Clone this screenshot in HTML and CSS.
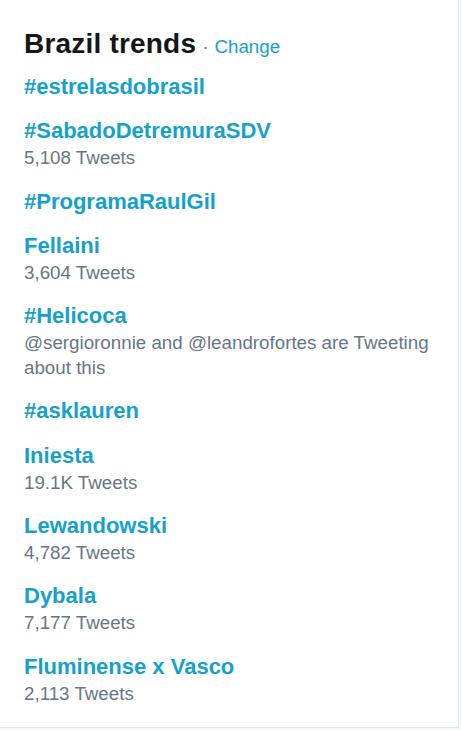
FILE: index.html
```html
<!DOCTYPE html>
<html>
<head>
<meta charset="utf-8">
<link rel="stylesheet" href="styles.css">
</head>
<body>
<div class="card">
  <div class="header">
    <h2 class="title">Brazil trends</h2>
    <span class="dot">·</span>
    <a class="change">Change</a>
  </div>
  <ul class="trends">
    <li class="trend"><a class="name">#estrelasdobrasil</a></li>
    <li class="trend"><a class="name">#SabadoDetremuraSDV</a><div class="meta">5,108 Tweets</div></li>
    <li class="trend"><a class="name">#ProgramaRaulGil</a></li>
    <li class="trend"><a class="name">Fellaini</a><div class="meta">3,604 Tweets</div></li>
    <li class="trend"><a class="name">#Helicoca</a><div class="meta">@sergioronnie and @leandrofortes are Tweeting about this</div></li>
    <li class="trend"><a class="name">#asklauren</a></li>
    <li class="trend"><a class="name">Iniesta</a><div class="meta">19.1K Tweets</div></li>
    <li class="trend"><a class="name">Lewandowski</a><div class="meta">4,782 Tweets</div></li>
    <li class="trend"><a class="name">Dybala</a><div class="meta">7,177 Tweets</div></li>
    <li class="trend"><a class="name">Fluminense x Vasco</a><div class="meta">2,113 Tweets</div></li>
  </ul>
</div>
</body>
</html>
```
FILE: styles.css
```css
html, body {
  margin: 0;
  padding: 0;
  background: #f5f8fa;
  font-family: "Liberation Sans", Arial, sans-serif;
}
.card {
  width: 459px;
  height: 728px;
  box-sizing: border-box;
  background: #ffffff;
  border-right: 1px solid #e1e8ed;
  border-bottom: 1px solid #e1e8ed;
  padding: 28px 20px 0 24px;
}
.header {
  display: flex;
  align-items: baseline;
}
.title {
  margin: 0;
  font-size: 28px;
  line-height: 32px;
  font-weight: bold;
  color: #14171a;
  letter-spacing: 0.2px;
}
.dot {
  font-size: 18.75px;
  color: #657786;
  margin: 0 6px 0 6px;
}
.change {
  font-size: 18.75px;
  color: #16a0cc;
}
.trends {
  list-style: none;
  margin: 14px 0 0 0;
  padding: 0;
  display: flex;
  flex-direction: column;
  gap: 18.3px;
}
.name {
  display: block;
  font-size: 22px;
  line-height: 26px;
  font-weight: bold;
  color: #16a0cc;
}
.meta {
  margin-top: 1px;
  font-size: 18.75px;
  line-height: 25px;
  color: #657786;
}
```
